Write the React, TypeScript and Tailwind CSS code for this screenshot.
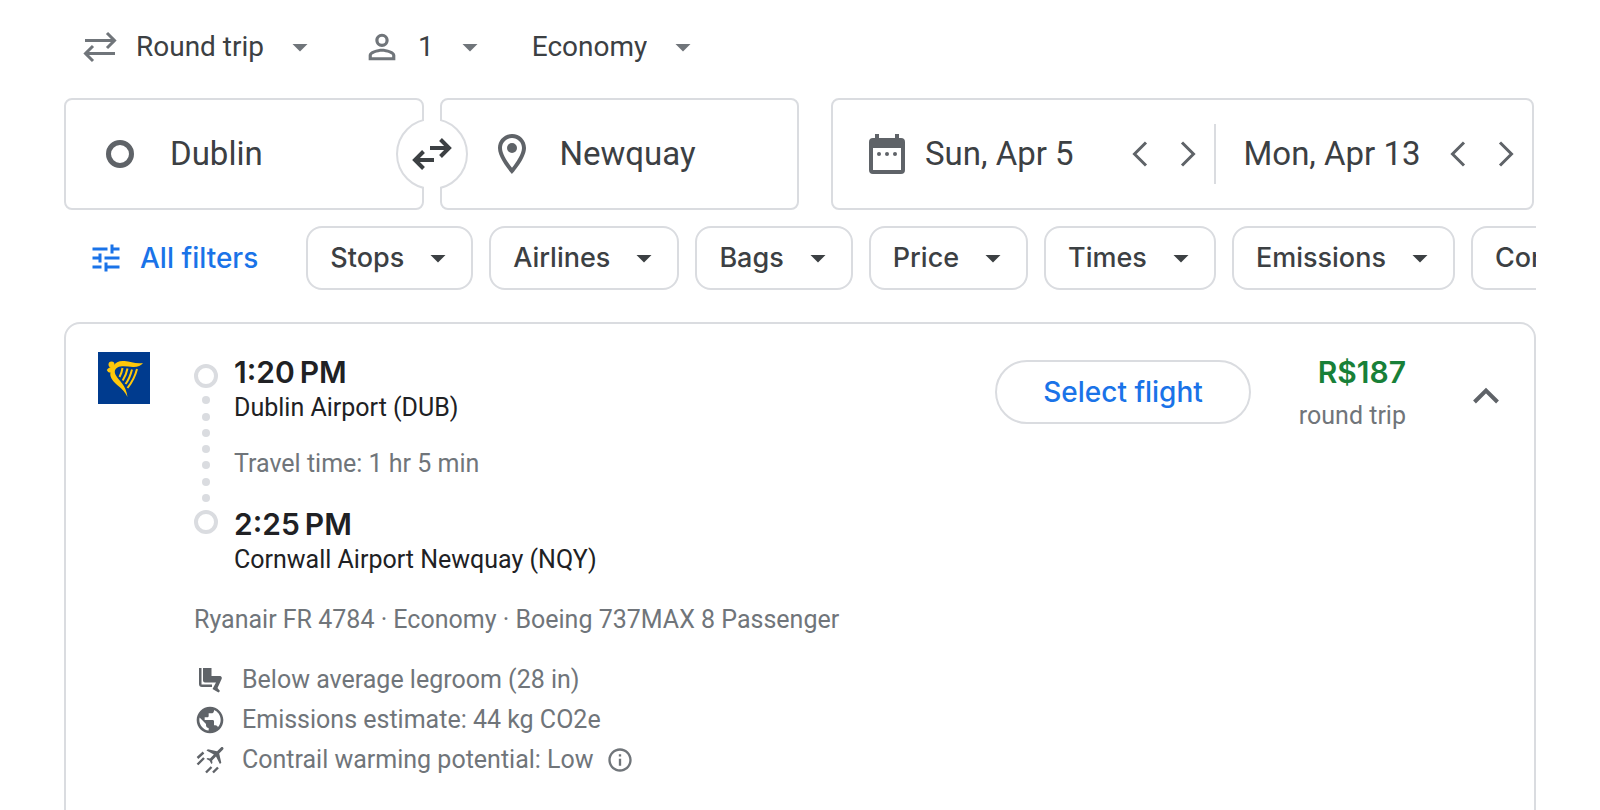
import React from "react";
import { MdArrowDropDown, MdInfoOutline, MdPersonOutline, MdPublic, MdTune } from "react-icons/md";

const filters = ["Stops", "Airlines", "Bags", "Price", "Times", "Emissions", "Connecting airports"];

interface TripSelectProps {
  label: string;
  options: string[];
  icon?: React.ReactNode;
}

const TripSelect: React.FC<TripSelectProps> = ({ label, options, icon }) => (
  <label className="flex items-center gap-4 text-[#70757a]">
    {icon}
    <span className="relative flex items-center">
      <select
        aria-label={label}
        className="field-sizing-content appearance-none bg-transparent pr-[54px] text-[28px] leading-9 text-[#3c4043] outline-none"
      >
        {options.map((option) => (
          <option key={option}>{option}</option>
        ))}
      </select>
      <MdArrowDropDown size={36} className="pointer-events-none absolute right-0" />
    </span>
  </label>
);

const RoundTripIcon = () => (
  <svg width="40" height="40" viewBox="0 0 40 40" fill="none" stroke="currentColor" strokeWidth="3">
    <path d="M5 13.5h29M27 6l7.5 7.5L27 21M35 26.5H6M13 19l-7.5 7.5L13 34" />
  </svg>
);

const SwapIcon = () => (
  <svg width="48" height="48" viewBox="0 0 48 48" fill="none" stroke="currentColor" strokeWidth="4">
    <path d="M22 18h19M32.500 9.500l8.500 8.500-8.500 8.500M26 30H7M15.500 21.500L7 30l8.500 8.500" />
  </svg>
);

const PinIcon = () => (
  <svg width="48" height="48" viewBox="0 0 24 24" fill="currentColor">
    <path d="M12 2C8.100 2 5 5.100 5 9c0 5.300 7 13 7 13s7-7.700 7-13c0-3.900-3.100-7-7-7zM7 9c0-2.800 2.200-5 5-5s5 2.200 5 5c0 2.900-2.900 7.200-5 9.900C9.900 16.200 7 11.900 7 9z" />
    <circle cx="12" cy="9" r="2.500" />
  </svg>
);

const CalendarIcon = () => (
  <svg width="36" height="40" viewBox="0 0 36 40" fill="currentColor">
    <path
      fillRule="evenodd"
      d="M6 0h4v4h16V0h4v4h2a4 4 0 0 1 4 4v28a4 4 0 0 1-4 4H4a4 4 0 0 1-4-4V8a4 4 0 0 1 4-4h2zM4 14v22h28V14z"
    />
    <circle cx="10" cy="20" r="2" />
    <circle cx="18" cy="20" r="2" />
    <circle cx="26" cy="20" r="2" />
  </svg>
);

const ChevronIcon: React.FC<{ d: string }> = ({ d }) => (
  <svg width="24" height="32" viewBox="0 0 24 32" fill="none" stroke="currentColor" strokeWidth="3">
    <path d={d} />
  </svg>
);

const DateField: React.FC<{ label: string; value: string }> = ({ label, value }) => (
  <>
    <input
      aria-label={label}
      defaultValue={value}
      className="min-w-0 flex-1 bg-transparent text-[33px] leading-10 text-[#3c4043] outline-none"
    />
    <div className="flex gap-6 text-[#5f6368]">
      <button aria-label={`Earlier ${label.toLowerCase()} date`}>
        <ChevronIcon d="M18 4.500L6.500 16 18 27.500" />
      </button>
      <button aria-label={`Later ${label.toLowerCase()} date`}>
        <ChevronIcon d="M6 4.500L17.500 16 6 27.500" />
      </button>
    </div>
  </>
);

const RyanairLogo = () => (
  <svg width="52" height="52" viewBox="0 0 52 52" role="img" aria-label="Ryanair">
    <rect width="52" height="52" fill="#003b8e" />
    <g fill="#ffc80a">
      <circle cx="13.500" cy="12.500" r="3" />
      <path d="M8.800 18c1.500-2.500 4-3 6.700-4 2-4 6-5.500 11-5 6 .6 11 3 18.500 2-2 3-6 4.200-10 4-6-.3-11-1.500-15.500.5-3 1.800-3.500 4.500-1.500 8 3.500 6 10 9.500 11.500 21.500-4.500-9.500-12-11.500-16-18.500-1.200-2.500-1.500-4-1-6-1.500.3-2.500-.5-3.700-2.500z" />
    </g>
    <path
      d="M24.500 16c-.6 4-1.300 6-3 9M29.500 16.500c-1 5-2.200 8-4.800 12M34 17.500c-1.500 6-3 10-6.500 14.500M39 17c-2 8-4.500 12.500-9.500 19"
      fill="none"
      stroke="#ffc80a"
      strokeWidth="2"
    />
  </svg>
);

const LegroomIcon = () => (
  <svg width="32" height="32" viewBox="0 0 32 32" fill="currentColor">
    <path d="M5 4h2.500v16.500H18V23H8a3 3 0 0 1-3-3z" />
    <path d="M9 4h8.500v8H26a2 2 0 0 1 1.700 2.700L23.500 24l2.500 3-1.500 1.500L18.500 25l3.500-6.500H11a2 2 0 0 1-2-2z" />
  </svg>
);

const ContrailIcon = () => (
  <svg width="32" height="32" viewBox="0 0 32 32" fill="currentColor">
    <path
      transform="translate(22 10.500) rotate(45) translate(-11.500 -12)"
      d="M21 16v-2l-8-5V3.500c0-.8-.7-1.500-1.500-1.500S10 2.700 10 3.500V9l-8 5v2l8-2.500V19l-2 1.500V22l3.500-1 3.500 1v-1.500L13 19v-5.500l8 2.500z"
    />
    <path d="M3.500 14l6-5.500M3.500 20.500l6.500-6.500M12 28.500l5.500-5.500M19 28.500l5-5" fill="none" stroke="currentColor" strokeWidth="2.400" />
  </svg>
);

const details = [
  { icon: <LegroomIcon />, text: "Below average legroom (28 in)" },
  { icon: <MdPublic size={32} />, text: "Emissions estimate: 44 kg CO2e" },
  { icon: <ContrailIcon />, text: "Contrail warming potential: Low", info: true },
];

const SearchForm = () => (
  <div className="mt-[31px] mr-0.5 flex h-28 gap-8">
    <div className="relative grid w-1/2 shrink-0 grid-cols-2 gap-4">
      <label className="flex min-w-0 items-center rounded-lg border-2 border-[#dadce0] pl-10">
        <span className="size-7 shrink-0 rounded-full border-[5px] border-[#5f6368]" />
        <input
          aria-label="Where from?"
          defaultValue="Dublin"
          className="ml-9 w-full min-w-0 bg-transparent text-[33px] leading-10 text-[#3c4043] outline-none"
        />
      </label>
      <label className="flex min-w-0 items-center rounded-lg border-2 border-[#dadce0] pl-[46px] text-[#5f6368]">
        <span className="shrink-0">
          <PinIcon />
        </span>
        <input
          aria-label="Where to?"
          defaultValue="Newquay"
          className="ml-6 w-full min-w-0 bg-transparent text-[33px] leading-10 text-[#3c4043] outline-none"
        />
      </label>
      <button
        aria-label="Swap origin and destination"
        className="absolute top-1/2 left-1/2 flex size-[72px] -translate-1/2 items-center justify-center rounded-full border-2 border-[#dadce0] bg-white text-[#3c4043]"
      >
        <span className="absolute -inset-y-1 left-1/2 w-4 -translate-x-1/2 bg-white" />
        <span className="relative">
          <SwapIcon />
        </span>
      </button>
    </div>
    <div className="flex min-w-0 flex-1 items-center rounded-lg border-2 border-[#dadce0] pr-3.5 pl-9 text-[#5f6368]">
      <CalendarIcon />
      <div className="ml-5 flex min-w-0 flex-1 items-center pr-3.5">
        <DateField label="Departure" value="Sun, Apr 5" />
      </div>
      <div className="flex h-[60px] min-w-0 flex-1 items-center border-l-2 border-[#dadce0] pl-7">
        <DateField label="Return" value="Mon, Apr 13" />
      </div>
    </div>
  </div>
);

const Stop: React.FC<{ time: string; airport: string }> = ({ time, airport }) => (
  <div className="text-[#202124]">
    <div className="font-[Inter] text-[30px] leading-10 font-semibold">{time}</div>
    <div className="text-[25px] leading-8">{airport}</div>
  </div>
);

const FlightCard = () => (
  <div className="mt-8 flex rounded-2xl border-2 border-[#dadce0] px-8 pt-7 pb-16">
    <RyanairLogo />
    <div className="ml-11 min-w-0 flex-1 text-[25px] leading-8 text-[#70757a]">
      <div className="flex gap-4">
        <div className="flex flex-col items-center justify-between pt-3 pb-[42px]">
          <span className="size-6 rounded-full border-4 border-[#dadce0]" />
          {[...Array(7)].map((_, i) => (
            <span key={i} className="size-2 rounded-full bg-[#dadce0]" />
          ))}
          <span className="size-6 rounded-full border-4 border-[#dadce0]" />
        </div>
        <div>
          <Stop time={"1:20\u202fPM"} airport="Dublin Airport (DUB)" />
          <div className="my-6">Travel time: 1 hr 5 min</div>
          <Stop time={"2:25\u202fPM"} airport="Cornwall Airport Newquay (NQY)" />
        </div>
      </div>
      <div className="mt-7">Ryanair FR 4784 · Economy · Boeing 737MAX 8 Passenger</div>
      <ul className="mt-7 flex flex-col gap-2">
        {details.map((detail) => (
          <li key={detail.text} className="flex items-center gap-4">
            <span className="text-[#5f6368]">{detail.icon}</span>
            {detail.text}
            {detail.info && (
              <button aria-label="About contrail warming" className="-ml-1">
                <MdInfoOutline size={28} />
              </button>
            )}
          </li>
        ))}
      </ul>
    </div>
    <div className="flex items-start">
      <button className="mt-2 h-16 rounded-full border-2 border-[#dadce0] px-[46px] font-[Inter] text-[28px] font-medium text-[#1a73e8]">
        Select flight
      </button>
      <div className="ml-12 text-right">
        <div className="font-[Inter] text-[30px] leading-10 font-semibold text-[#188038]">R$187</div>
        <div className="mt-2 text-[25px] leading-8 text-[#70757a]">round trip</div>
      </div>
      <button aria-label="Collapse flight details" className="mt-7 ml-16 text-[#5f6368]">
        <svg width="32" height="32" viewBox="0 0 32 32" fill="none" stroke="currentColor" strokeWidth="4">
          <path d="M4.500 22L16 10.500 27.500 22" />
        </svg>
      </button>
    </div>
  </div>
);

const App = () => (
  <div className="h-screen overflow-hidden bg-white px-16 pt-[27px] font-[Roboto,sans-serif]">
    <div className="flex gap-11 pl-4">
      <TripSelect label="Trip type" options={["Round trip", "One way", "Multi-city"]} icon={<RoundTripIcon />} />
      <TripSelect label="Passengers" options={["1", "2", "3", "4"]} icon={<MdPersonOutline size={40} />} />
      <TripSelect label="Cabin class" options={["Economy", "Premium economy", "Business", "First"]} />
    </div>
    <SearchForm />
    <div className="mt-4 flex gap-4 overflow-hidden font-[Inter] text-[27px] font-medium text-[#3c4043]">
      <button className="mr-8 flex h-16 shrink-0 items-center gap-4 pl-6 text-[28px] text-[#1a73e8]">
        <MdTune size={36} />
        All filters
      </button>
      {filters.map((name) => (
        <button
          key={name}
          aria-haspopup="dialog"
          className="flex h-16 shrink-0 items-center gap-4 rounded-2xl border-2 border-[#dadce0] pr-[15px] pl-[22px]"
        >
          {name}
          <MdArrowDropDown size={36} />
        </button>
      ))}
    </div>
    <FlightCard />
  </div>
);

export default App;
